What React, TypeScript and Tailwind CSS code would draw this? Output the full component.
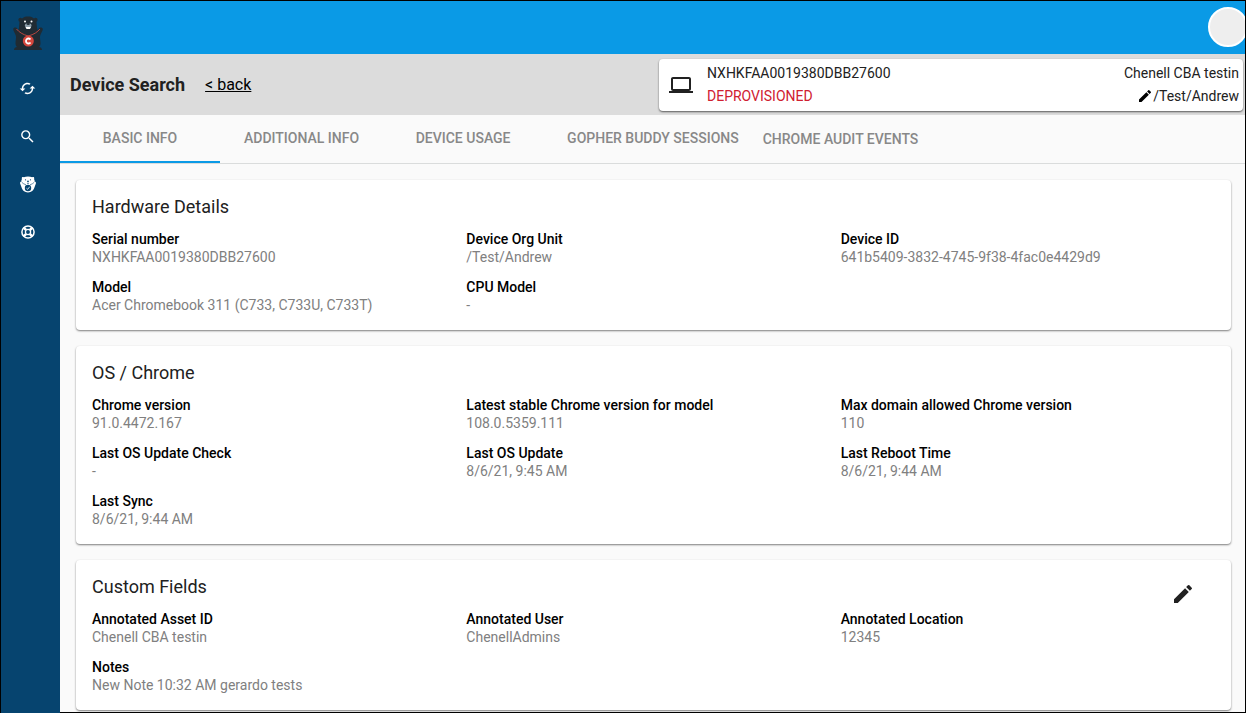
import { MdCached, MdEdit, MdLaptop, MdSearch } from "react-icons/md";

const tabs = [
  "BASIC INFO",
  "ADDITIONAL INFO",
  "DEVICE USAGE",
  "GOPHER BUDDY SESSIONS",
];

const sections = [
  {
    title: "Hardware Details",
    editable: false,
    fields: [
      { label: "Serial number", value: "NXHKFAA0019380DBB27600" },
      { label: "Device Org Unit", value: "/Test/Andrew" },
      { label: "Device ID", value: "641b5409-3832-4745-9f38-4fac0e4429d9" },
      { label: "Model", value: "Acer Chromebook 311 (C733, C733U, C733T)" },
      { label: "CPU Model", value: "-" },
    ],
  },
  {
    title: "OS / Chrome",
    editable: false,
    fields: [
      { label: "Chrome version", value: "91.0.4472.167" },
      { label: "Latest stable Chrome version for model", value: "108.0.5359.111" },
      { label: "Max domain allowed Chrome version", value: "110" },
      { label: "Last OS Update Check", value: "-" },
      { label: "Last OS Update", value: "8/6/21, 9:45 AM" },
      { label: "Last Reboot Time", value: "8/6/21, 9:44 AM" },
      { label: "Last Sync", value: "8/6/21, 9:44 AM" },
    ],
  },
  {
    title: "Custom Fields",
    editable: true,
    fields: [
      { label: "Annotated Asset ID", value: "Chenell CBA testin" },
      { label: "Annotated User", value: "ChenellAdmins" },
      { label: "Annotated Location", value: "12345" },
      { label: "Notes", value: "New Note 10:32 AM gerardo tests" },
    ],
  },
];

function GopherLogo() {
  return (
    <svg width="30" height="34" viewBox="0 0 30 34" fill="none" aria-hidden="true">
      <path
        d="M9 2.500C7.500.800 5 2 5.500 4.300c.100.700.500 1.200 1 1.500L6 12l-1 3-.8-2.500C3.500 11 .500 11 .200 13c0 2 1.800 4 2.600 6.500.700 2.500-.300 4.500-.300 7.500 0 2 .500 3.300 1.500 4-1.500 0-3 1-3 3h28c0-2-1.500-3-3-3 1-.700 1.500-2 1.500-4 0-3-1-5-.300-7.500.800-2.500 2.600-4.500 2.600-6.500-.300-2-3.300-2-4-.5L25 15l-1-3-.500-6.200c.500-.300.900-.800 1-1.500.5-2.300-2-3.500-3.500-1.800C19 .800 17 .500 15 .500s-4 .300-6 2z"
        fill="#202b33"
      />
      <circle cx="12" cy="5.500" r="1" fill="#fff" />
      <circle cx="18.500" cy="5.500" r="1" fill="#fff" />
      <ellipse cx="15.200" cy="9.500" rx="3.300" ry="2.200" fill="#8fa0ab" />
      <ellipse cx="15.200" cy="8" rx="1.700" ry="1" fill="#202b33" />
      <path d="M12.500 11h5.500l-1 2h-3.500z" fill="#fff" />
      <path d="M3.500 13c2.500 3 6 5.500 11.700 7M27 13c-2.500 3-6 5.500-11.800 7" stroke="#b8473f" />
      <circle cx="15.300" cy="25" r="5.500" fill="#d5473d" />
      <path d="M17.500 23.500a2.500 2.500 0 1 0 0 3" stroke="#fff" strokeWidth="1.800" />
    </svg>
  );
}

function GopherIcon() {
  return (
    <svg width="16" height="17" viewBox="0 0 16 17" fill="none" aria-hidden="true">
      <path
        d="M3.800 1.300C2.500.300 1.200 1.700 2 3c-.5.800-.8 1.800-.6 2.700C.300 5.500-.200 6.500.200 7.700l1.300 3.600c.700 3 3.200 5.200 6.500 5.200s5.800-2.200 6.500-5.200l1.300-3.600c.4-1.200-.100-2.200-1.200-2 .200-.9-.100-1.900-.600-2.700.800-1.300-.500-2.700-1.800-1.700C10 .200 6 .200 3.800 1.300z"
        fill="#fff"
      />
      <g fill="#06446f">
        <circle cx="5.500" cy="3.800" r=".6" />
        <circle cx="10.500" cy="3.800" r=".6" />
        <path d="M6.800 4.800h2.400L8.500 6h-1zM7.300 6.700h1.400v1H7.300z" />
        <circle cx="8" cy="12" r="3.200" />
      </g>
      <path d="M1.800 6.300C3 7.500 4.300 8.300 6 8.800M14.200 6.300C13 7.500 11.700 8.300 10 8.800" stroke="#06446f" strokeWidth=".6" />
      <path d="M6.500 12.300l1.200 1 2-2.600" stroke="#fff" strokeWidth=".8" />
    </svg>
  );
}

function SupportIcon() {
  return (
    <svg width="14" height="14" viewBox="0 0 14 14" fill="none" stroke="#fff" aria-hidden="true">
      <circle cx="7" cy="7" r="6.100" strokeWidth="1.500" />
      <circle cx="7" cy="7" r="2.600" strokeWidth="1.300" />
      <path d="M2.700 2.700l2.500 2.500M8.800 8.800l2.500 2.500M11.300 2.700L8.800 5.200M5.200 8.800l-2.500 2.500" strokeWidth="2.600" />
    </svg>
  );
}

const navItems = [
  { label: "Sync", icon: <MdCached size={17} /> },
  { label: "Search", icon: <MdSearch size={17} /> },
  { label: "Gopher Buddy", icon: <GopherIcon /> },
  { label: "Support", icon: <SupportIcon /> },
];

function Sidebar() {
  return (
    <nav className="-mb-0.5 flex w-[59px] shrink-0 flex-col bg-[#06446f] pr-1.5 text-white">
      <a href="#home" aria-label="Home" className="flex h-[63px] items-center justify-center">
        <GopherLogo />
      </a>
      {navItems.map((item) => (
        <a
          key={item.label}
          href="#nav"
          aria-label={item.label}
          className="flex h-12 items-center justify-center"
        >
          {item.icon}
        </a>
      ))}
    </nav>
  );
}

function DeviceSummary() {
  return (
    <div className="flex h-[52px] w-[584px] items-center rounded bg-white pl-2.5 pr-1 text-sm leading-[23px] text-[#212121] shadow-[0_1px_2px_rgba(0,0,0,0.6)]">
      <MdLaptop size={24} />
      <div className="ml-3.5">
        <p>NXHKFAA0019380DBB27600</p>
        <p className="text-[#d02030]">DEPROVISIONED</p>
      </div>
      <div className="ml-auto flex flex-col items-end">
        <p>Chenell CBA testin</p>
        <button className="flex items-center">
          <MdEdit size={16} className="text-black" />
          /Test/Andrew
        </button>
      </div>
    </div>
  );
}

export default function App() {
  return (
    <div className="flex border border-black bg-[#fafafa] font-[Roboto,sans-serif] text-[#212121]">
      <Sidebar />
      <div className="min-w-0 flex-1">
        <header className="flex h-[53px] items-start justify-end overflow-hidden bg-[#0a9ae6] pt-1.5">
          <button
            aria-label="Account"
            className="-mr-[3px] size-10 shrink-0 rounded-full border-2 border-white bg-[#eeeeee]"
          />
        </header>

        <div className="flex h-[61px] items-center justify-between bg-[#dcdcdc] pl-2.5 pr-0.5">
          <div className="flex items-center gap-5">
            <h1 className="text-lg font-bold">Device Search</h1>
            <a href="#back" className="text-base text-black underline">
              &lt; back
            </a>
          </div>
          <DeviceSummary />
        </div>

        <div
          role="tablist"
          className="flex h-[49px] border-b border-[#dadcdc] text-sm font-medium text-[#888888]"
        >
          {tabs.map((tab, index) => (
            <button
              key={tab}
              role="tab"
              aria-selected={index === 0}
              className={
                index === 0
                  ? "min-w-40 border-b-2 border-[#0a9ae6] px-6"
                  : "min-w-40 border-b-2 border-transparent px-6"
              }
            >
              {tab}
            </button>
          ))}
          <button role="tab" aria-selected={false}>
            CHROME AUDIT EVENTS
          </button>
        </div>

        <main className="flex flex-col gap-4 pb-0.5 pl-4 pr-3.5 pt-4">
          {sections.map((section) => (
            <section
              key={section.title}
              className="rounded bg-white p-4 shadow-[0_1px_2px_rgba(0,0,0,0.5)]"
            >
              <div className="mb-3 flex h-[22px] items-center justify-between">
                <h2 className="text-lg">{section.title}</h2>
                {section.editable && (
                  <button aria-label="Edit custom fields" className="mr-5 mt-3.5">
                    <MdEdit size={24} />
                  </button>
                )}
              </div>
              <dl className="grid grid-cols-3 gap-y-3 text-sm leading-[18px]">
                {section.fields.map((field) => (
                  <div key={field.label}>
                    <dt className="font-medium text-black">{field.label}</dt>
                    <dd className="text-[#808080]">{field.value}</dd>
                  </div>
                ))}
              </dl>
            </section>
          ))}
        </main>
      </div>
    </div>
  );
}
